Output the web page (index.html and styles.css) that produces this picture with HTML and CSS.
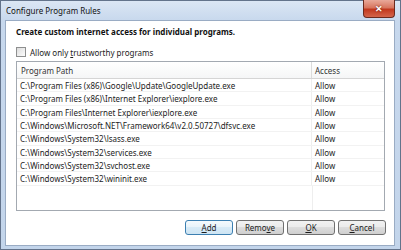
FILE: index.html
```html
<!DOCTYPE html>
<html lang="en">
  <head>
    <meta charset="UTF-8" />
    <title>Configure Program Rules</title>
    <link rel="stylesheet" href="styles.css">
  </head>
  <body>
    <div class="window">
      <div class="titlebar">
        <span class="title">Configure Program Rules</span>
        <span class="close">&#x2715;</span>
      </div>
      <div class="client">
        <p class="heading">Create custom internet access for individual programs.</p>
        <label class="check">
          <span class="box"></span>
          <span>Allow only <u>t</u>rustworthy programs</span>
        </label>
        <div class="list">
          <div class="row head">
            <div class="c1">Program Path</div>
            <div class="c2">Access</div>
          </div>
          <div class="row"><div class="c1">C:\Program Files (x86)\Google\Update\GoogleUpdate.exe</div><div class="c2">Allow</div></div>
          <div class="row"><div class="c1">C:\Program Files (x86)\Internet Explorer\iexplore.exe</div><div class="c2">Allow</div></div>
          <div class="row"><div class="c1">C:\Program Files\Internet Explorer\iexplore.exe</div><div class="c2">Allow</div></div>
          <div class="row"><div class="c1">C:\Windows\Microsoft.NET\Framework64\v2.0.50727\dfsvc.exe</div><div class="c2">Allow</div></div>
          <div class="row"><div class="c1">C:\Windows\System32\lsass.exe</div><div class="c2">Allow</div></div>
          <div class="row"><div class="c1">C:\Windows\System32\services.exe</div><div class="c2">Allow</div></div>
          <div class="row"><div class="c1">C:\Windows\System32\svchost.exe</div><div class="c2">Allow</div></div>
          <div class="row"><div class="c1">C:\Windows\System32\wininit.exe</div><div class="c2">Allow</div></div>
        </div>
        <div class="buttons">
          <button class="btn default"><u>A</u>dd</button>
          <button class="btn">Remo<u>v</u>e</button>
          <button class="btn"><u>O</u>K</button>
          <button class="btn"><u>C</u>ancel</button>
        </div>
      </div>
    </div>
  </body>
</html>
```

FILE: styles.css
```css
body {
  margin: 0;
  font-family: "Noto Sans", sans-serif;
  font-size: 8px;
  color: #1c1c1c;
}

.window {
  width: 401px;
  height: 250px;
  box-sizing: border-box;
  border: 1px solid #63738b;
  background: linear-gradient(#dbe6f4, #c7d8ed 20px, #c3d5eb);
  display: flex;
  flex-direction: column;
}

.titlebar {
  height: 19px;
  display: flex;
  align-items: flex-start;
}

.title {
  padding: 4px 0 0 5px;
  line-height: 12px;
  color: #111;
}

.close {
  width: 32px;
  height: 18px;
  box-sizing: border-box;
  margin: -1px 5px 0 auto;
  border: 1px solid #6b2a1e;
  border-top: none;
  border-radius: 0 0 4px 4px;
  background: linear-gradient(#e9a99a, #d8765f 45%, #c2391f 55%, #d4654b);
  color: #fff;
  font-size: 9px;
  font-weight: bold;
  line-height: 17px;
  text-align: center;
  text-shadow: 0 0 2px #5a1608;
}

.client {
  flex: 1;
  margin: 0 5px 3px 4px;
  border: 1px solid #9aacc4;
  background: #fff;
  padding: 5px 9px 0 10px;
}

.heading {
  margin: 0;
  font-weight: bold;
  line-height: 12px;
  color: #111;
}

.check {
  display: flex;
  align-items: center;
  gap: 4px;
  height: 12px;
  margin-top: 8px;
}

.box {
  width: 10px;
  height: 10px;
  box-sizing: border-box;
  border: 1px solid #8e8f8f;
  background: linear-gradient(135deg, #dcdcdc, #fdfdfd);
}

.list {
  height: 150px;
  box-sizing: border-box;
  margin-top: 3px;
  border: 1px solid #a3a9b1;
  background: linear-gradient(to right, transparent 295px, #eeeeee 295px, #eeeeee 296px, transparent 296px);
}

.row {
  display: flex;
  height: 13.33px;
  line-height: 13px;
  box-sizing: border-box;
  border-bottom: 1px solid #f2f2f2;
  white-space: nowrap;
  background: #fff;
}

.row .c1 {
  width: 295px;
  box-sizing: border-box;
  padding-left: 3px;
  border-right: 1px solid #eeeeee;
}

.row .c2 {
  padding-left: 3px;
}

.head {
  height: 17px;
  padding-top: 3px;
  line-height: 12px;
  border-bottom: 1px solid #d5d5d5;
  background: linear-gradient(#ffffff, #f5f6f7);
  color: #333;
}

.head .c1 {
  padding-left: 4px;
  border-right: 1px solid #dcdcdc;
  margin-top: -3px;
  padding-top: 3px;
}

.buttons {
  display: flex;
  justify-content: flex-end;
  gap: 3px;
  margin: 9px -1px 0 0;
}

.btn {
  width: 48px;
  height: 15px;
  padding: 0;
  border: 1px solid #707070;
  border-radius: 3px;
  background: linear-gradient(#f2f2f2, #ebebeb 50%, #dddddd 50%, #cfcfcf);
  font: inherit;
  line-height: 13px;
  color: #1c1c1c;
}

.btn.default {
  border-color: #3c7fb1;
  background: linear-gradient(#f4fafd, #e8f3fa 50%, #d8ebf7 50%, #cde4f3);
}
```
